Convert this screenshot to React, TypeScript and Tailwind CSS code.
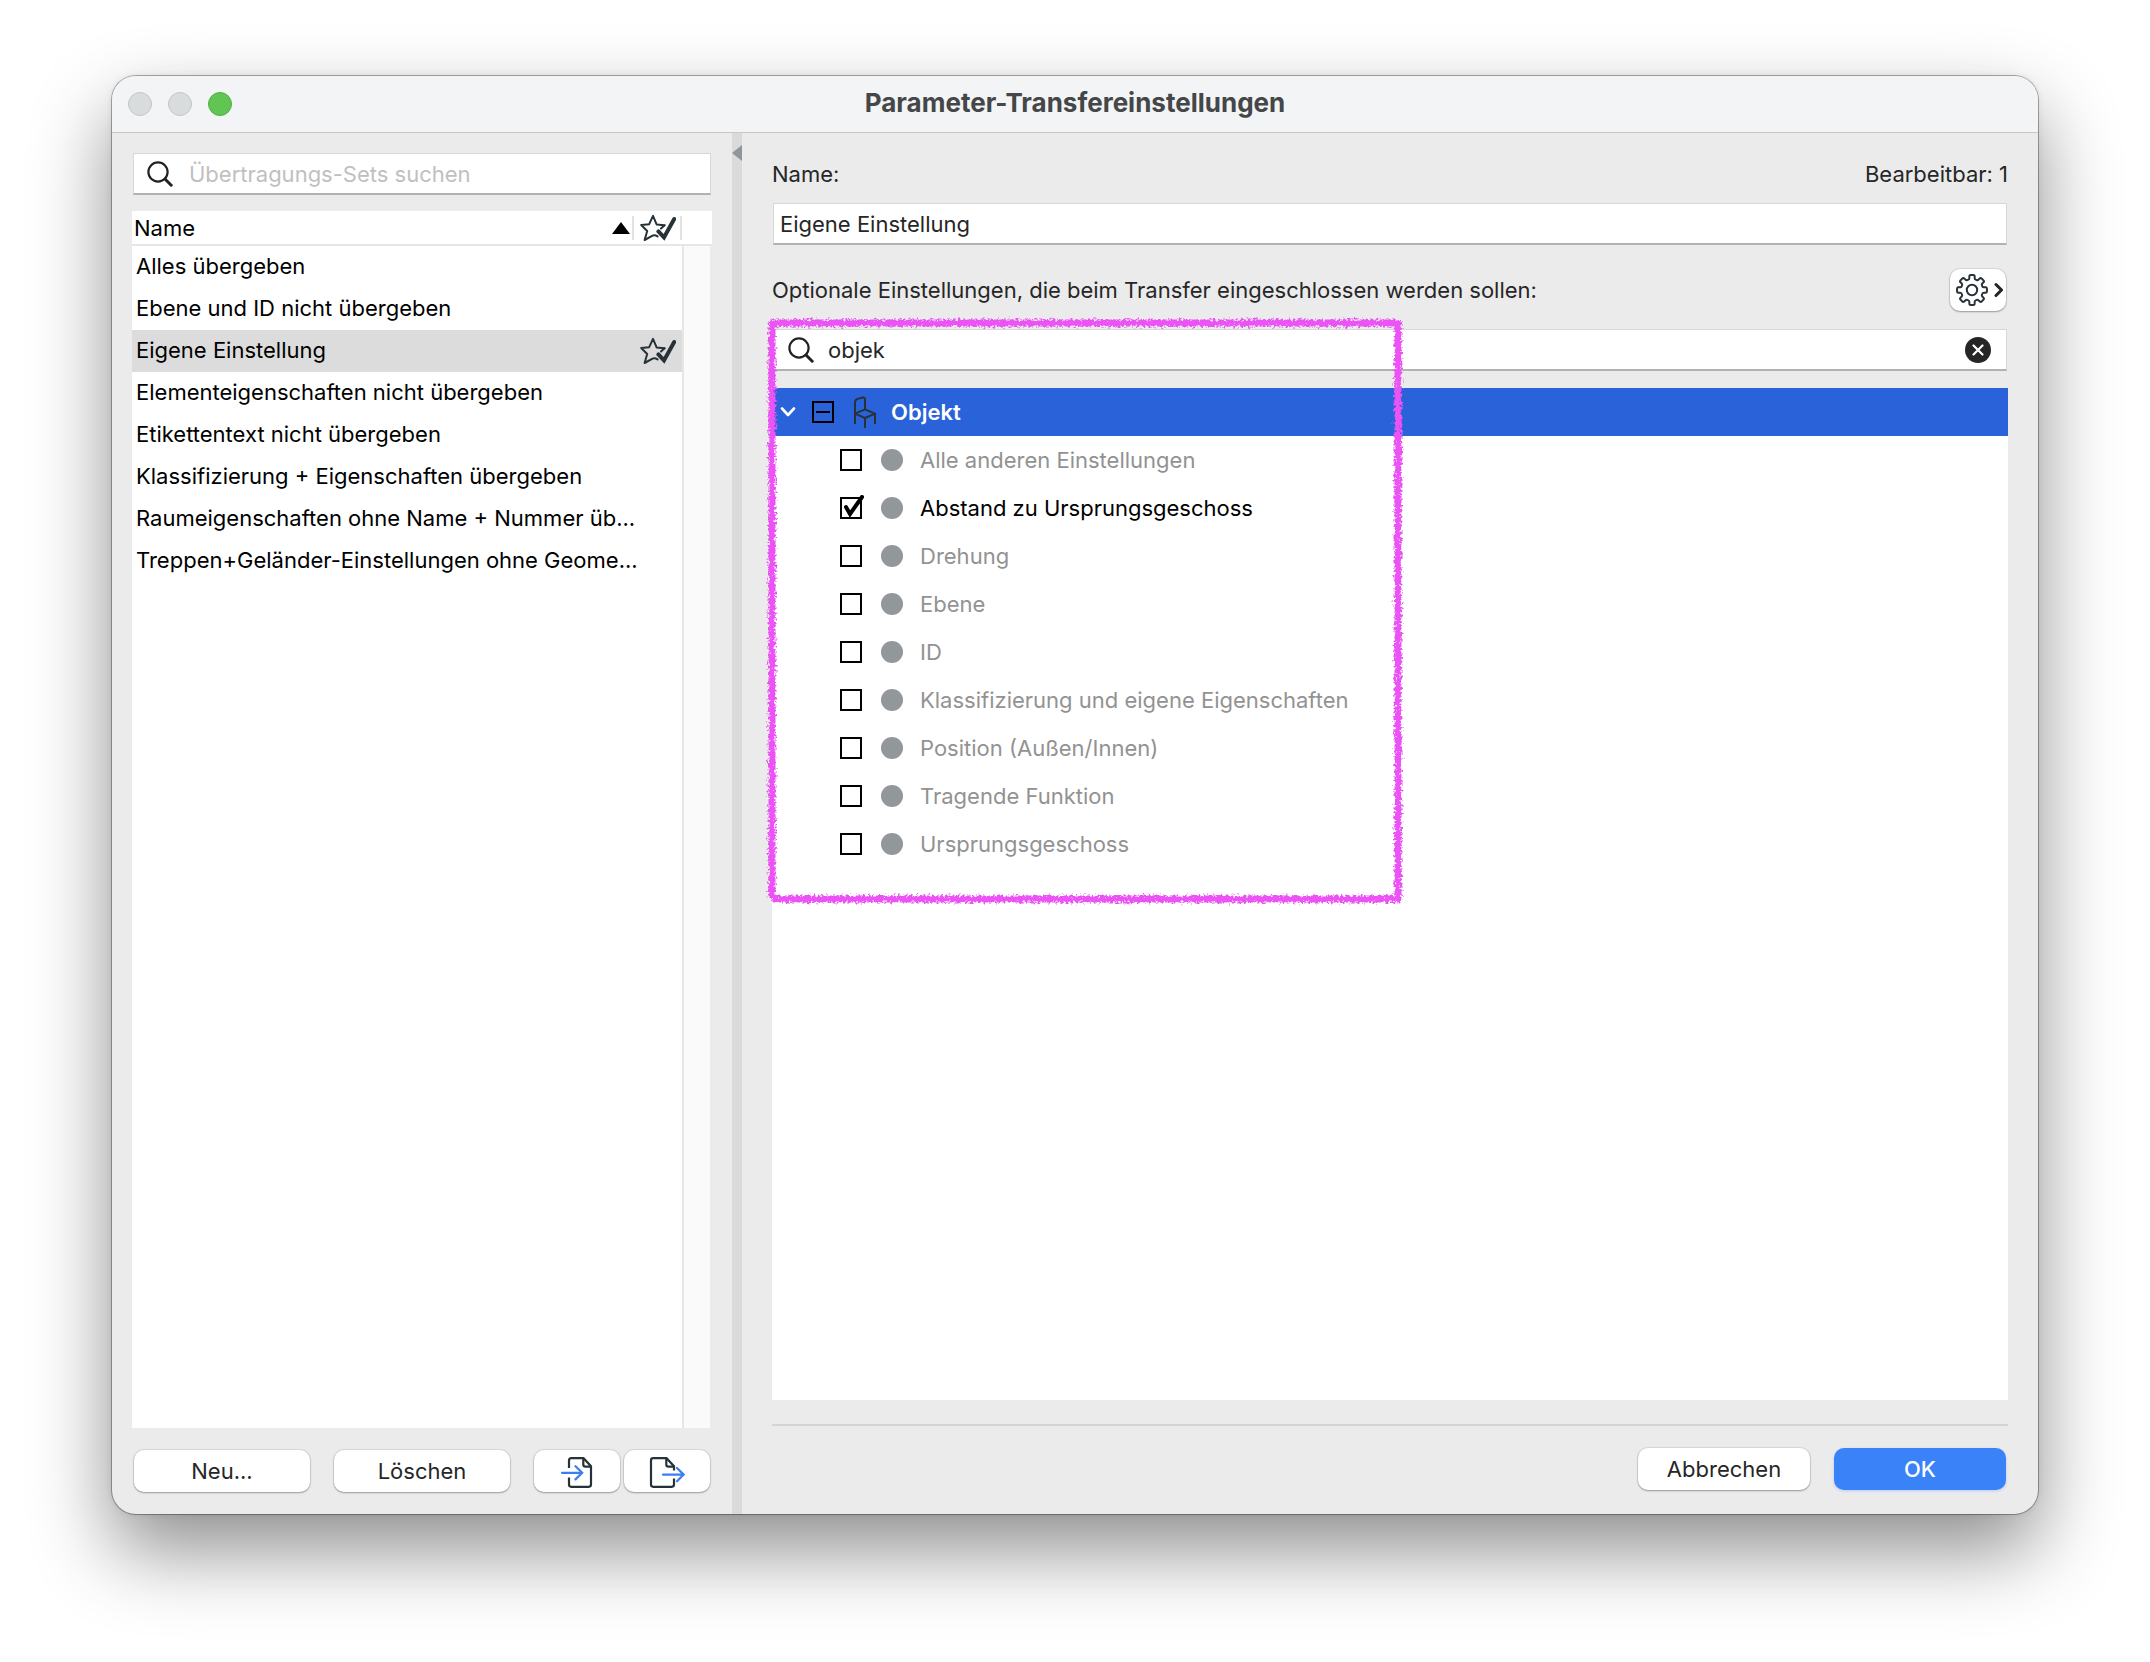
import { useState } from "react";

const sets = [
  "Alles übergeben",
  "Ebene und ID nicht übergeben",
  "Eigene Einstellung",
  "Elementeigenschaften nicht übergeben",
  "Etikettentext nicht übergeben",
  "Klassifizierung + Eigenschaften übergeben",
  "Raumeigenschaften ohne Name + Nummer üb...",
  "Treppen+Geländer-Einstellungen ohne Geome...",
];

const options = [
  "Alle anderen Einstellungen",
  "Abstand zu Ursprungsgeschoss",
  "Drehung",
  "Ebene",
  "ID",
  "Klassifizierung und eigene Eigenschaften",
  "Position (Außen/Innen)",
  "Tragende Funktion",
  "Ursprungsgeschoss",
];

const fieldClass =
  "flex h-[42px] items-center border border-b-2 border-[#d8d8d8] border-b-[#b2b2b2] bg-white";
const buttonClass =
  "flex h-[42px] items-center justify-center rounded-[10px] bg-white shadow-[0_0_0_1px_rgba(0,0,0,0.07),0_1px_2px_rgba(0,0,0,0.3)]";

function SearchIcon() {
  return (
    <svg className="h-[26px] w-[26px] shrink-0" viewBox="0 0 26 26" fill="none" stroke="#222" aria-hidden="true">
      <circle cx="11" cy="11" r="9.6" strokeWidth="2.2" />
      <path d="M18 18l6.2 6.2" strokeWidth="3" strokeLinecap="round" />
    </svg>
  );
}

function StarCheckIcon() {
  return (
    <svg className="h-7 w-9" viewBox="0 0 36 28" fill="none" stroke="#263238" aria-hidden="true">
      <path
        d="M24.5 11.3L16.6 10.4L13 1.8L9.2 10.2L1.2 11L7.2 17L4.6 26L12.6 21.6Q15 20.8 17.6 22.4"
        strokeWidth="2"
        strokeLinejoin="round"
        strokeLinecap="round"
      />
      <path d="M24.5 11.3L21 14.6" strokeWidth="2" strokeLinecap="round" />
      <path d="M18.4 17.4L24 23.4L34.2 5" strokeWidth="4" strokeLinecap="round" />
    </svg>
  );
}

function ImportIcon() {
  return (
    <svg className="h-8 w-8" viewBox="0 0 32 32" fill="none" strokeWidth="2.2" aria-hidden="true">
      <path d="M8 12V4.500Q8 2.200 10.200 2.200H22.500L30 10.200V28.600Q30 30.800 27.800 30.800H10.200Q8 30.800 8 28.600V21.500" stroke="#263238" />
      <path d="M22.300 2.500V8.500Q22.300 10.700 24.500 10.700H30" stroke="#263238" />
      <path d="M1 16.800H21M14.500 10.200L21.200 16.800L14.500 23.400" stroke="#3c7df6" strokeLinecap="round" />
    </svg>
  );
}

function ExportIcon() {
  return (
    <svg className="h-8 w-9" viewBox="0 0 36 32" fill="none" strokeWidth="2.2" aria-hidden="true">
      <path d="M25 14.500V10.200L17.500 2.200H4.200Q2 2.200 2 4.400V28.600Q2 30.800 4.200 30.800H22.800Q25 30.800 25 28.600V22.500" stroke="#263238" />
      <path d="M17.300 2.500V8.500Q17.300 10.700 19.500 10.700H25" stroke="#263238" />
      <path d="M14 18.600H34.500M28 12L34.700 18.600L28 25.200" stroke="#3c7df6" strokeLinecap="round" />
    </svg>
  );
}

function GearIcon() {
  const points: string[] = [];
  for (let i = 0; i < 8; i++) {
    const at = (deg: number, r: number) => {
      const a = ((i * 45 + deg - 90) * Math.PI) / 180;
      return `${(16 + r * Math.cos(a)).toFixed(2)} ${(16 + r * Math.sin(a)).toFixed(2)}`;
    };
    points.push(
      `${i === 0 ? "M" : "L"}${at(-12.5, 12.4)}L${at(-11, 13.8)}Q${at(-10.5, 15.2)} ${at(-5, 15)}L${at(5, 15)}Q${at(10.5, 15.2)} ${at(11, 13.8)}L${at(12.5, 12.4)}Q${at(14, 11)} ${at(19, 11)}L${at(26, 11)}Q${at(31, 11)} ${at(32.5, 12.4)}`,
    );
  }
  return (
    <svg className="h-8 w-8" viewBox="0 0 32 32" fill="none" stroke="#263238" strokeWidth="2" strokeLinejoin="round" aria-hidden="true">
      <path d={points.join("") + "Z"} />
      <circle cx="16" cy="16" r="5.2" />
    </svg>
  );
}

function ChairIcon() {
  return (
    <svg className="h-8 w-6" viewBox="0 0 24 32" fill="none" stroke="#263238" strokeWidth="2" aria-hidden="true">
      <path d="M2 28V6.500Q2 3.600 4.800 2.900L9.600 1.600Q12 1.200 12 3.400V13.500" />
      <path d="M2 17.600L12 13.400L22 17.600L12 22Z" strokeLinejoin="round" />
      <path d="M22 17V28M12 22V32" />
    </svg>
  );
}

function MarkerFrame() {
  return (
    <svg
      className="pointer-events-none absolute -left-1.5 -top-[14px] h-[592px] w-[640px]"
      viewBox="0 0 640 592"
      fill="none"
      aria-hidden="true"
    >
      <filter id="crayon" x="0" y="0" width="640" height="592" filterUnits="userSpaceOnUse">
        <feTurbulence type="fractalNoise" baseFrequency="0.4" numOctaves="2" seed="4" result="noise" />
        <feDisplacementMap in="SourceGraphic" in2="noise" scale="8" xChannelSelector="R" yChannelSelector="G" />
      </filter>
      <g filter="url(#crayon)" stroke="#ec52f5" strokeWidth="7">
        <path d="M3 8H633" />
        <path d="M6 5V583" />
        <path d="M632 6V585" />
        <path d="M6 584H635" />
      </g>
    </svg>
  );
}

export default function App() {
  const [selected, setSelected] = useState(2);
  const [checked, setChecked] = useState<number[]>([1]);
  const [name, setName] = useState("Eigene Einstellung");
  const [filter, setFilter] = useState("objek");
  const toggle = (i: number) =>
    setChecked((c) => (c.includes(i) ? c.filter((x) => x !== i) : [...c, i]));

  return (
    <div className="flex min-h-screen flex-col bg-white px-28 pt-[76px] pb-[148px] font-['Inter',sans-serif] text-[22px] leading-7 text-[#262626]">
      <main className="flex flex-1 flex-col overflow-hidden rounded-[24px] bg-[#ebebeb] shadow-[0_0_0_1px_rgba(0,0,0,0.3),0_0_6px_rgba(0,0,0,0.1),0_36px_80px_rgba(0,0,0,0.45)]">
        <header className="grid h-[57px] shrink-0 grid-cols-[1fr_auto_1fr] items-center border-b border-[#c6c8c9] bg-[#f2f4f6] px-4">
          <div className="flex gap-4">
            <button aria-label="Schließen" className="h-6 w-6 rounded-full border border-[#c3c5c6] bg-[#d9dcdd]" />
            <button aria-label="Minimieren" className="h-6 w-6 rounded-full border border-[#c3c5c6] bg-[#d9dcdd]" />
            <button aria-label="Maximieren" className="h-6 w-6 rounded-full border border-[#54ad46] bg-[#61c554]" />
          </div>
          <h1 className="pb-0.5 text-[26px] font-bold text-[#454647]">Parameter-Transfereinstellungen</h1>
        </header>

        <div className="flex flex-1">
          <section className="flex w-[620px] shrink-0 flex-col px-5 pt-5 pb-[22px]">
            <label className={`${fieldClass} mx-px gap-4 pl-[13px]`}>
              <SearchIcon />
              <input
                aria-label="Übertragungs-Sets suchen"
                placeholder="Übertragungs-Sets suchen"
                className="min-w-0 flex-1 outline-none placeholder:text-[#c0c0c0]"
              />
            </label>

            <div className="mt-4 flex flex-1 flex-col">
              <table className="w-full table-fixed border-collapse text-black">
                <colgroup>
                  <col />
                  <col className="w-12" />
                  <col className="w-[30px]" />
                </colgroup>
                <thead>
                  <tr className="h-[34px] border-b-2 border-[#e6e6e6] bg-white">
                    <th className="p-0 text-left font-normal">
                      <button className="flex w-full items-center justify-between border-r-2 border-[#e2e2e2] px-0.5 leading-6">
                        Name
                        <svg className="h-3 w-[18px]" viewBox="0 0 18 12" aria-hidden="true">
                          <path d="M9 0L18 12H0Z" fill="#000" />
                        </svg>
                      </button>
                    </th>
                    <th className="p-0" aria-label="Favorit">
                      <span className="flex h-6 items-center border-r-2 border-[#e2e2e2] pl-1.5">
                        <StarCheckIcon />
                      </span>
                    </th>
                    <td />
                  </tr>
                </thead>
                <tbody>
                  {sets.map((s, i) => (
                    <tr
                      key={s}
                      onClick={() => setSelected(i)}
                      className={`h-[42px] ${i === selected ? "bg-[#dcdcdc]" : "bg-white"}`}
                    >
                      <td className="pt-0 pr-0 pb-0.5 pl-1 whitespace-nowrap">{s}</td>
                      <td className="py-0 pr-0 pl-1.5">{i === selected && <StarCheckIcon />}</td>
                      <td className="bg-[#ebebeb] p-0">
                        <div className="mr-0.5 h-[42px] border-l-2 border-[#e6e6e6] bg-[#fafafa]" />
                      </td>
                    </tr>
                  ))}
                </tbody>
              </table>
              <div className="flex flex-1 pr-0.5">
                <div className="flex-1 bg-white" />
                <div className="w-7 border-l-2 border-[#e6e6e6] bg-[#fafafa]" />
              </div>
            </div>

            <div className="mx-0.5 mt-[22px] flex gap-6">
              <button className={`${buttonClass} flex-1`}>Neu...</button>
              <button className={`${buttonClass} flex-1`}>Löschen</button>
              <div className="flex gap-1">
                <button aria-label="Importieren" className={`${buttonClass} w-[86px] pt-0.5`}>
                  <ImportIcon />
                </button>
                <button aria-label="Exportieren" className={`${buttonClass} w-[86px] pt-0.5`}>
                  <ExportIcon />
                </button>
              </div>
            </div>
          </section>

          <div className="w-2.5 shrink-0 bg-[#dadada] pt-3">
            <svg className="h-4 w-2.5" viewBox="0 0 10 16" aria-hidden="true">
              <path d="M0 8L10 0V16Z" fill="#8f9599" />
            </svg>
          </div>

          <section className="flex min-w-0 flex-1 flex-col px-[30px] pt-[27px] pb-6">
            <div className="flex justify-between">
              <label htmlFor="set-name">Name:</label>
              <span>Bearbeitbar: 1</span>
            </div>
            <input
              id="set-name"
              value={name}
              onChange={(e) => setName(e.target.value)}
              className={`${fieldClass} mx-px mt-[15px] px-1.5 outline-none`}
            />
            <div className="mt-6 mr-0.5 flex items-center justify-between">
              <span>Optionale Einstellungen, die beim Transfer eingeschlossen werden sollen:</span>
              <button aria-label="Einstellungen" className={`${buttonClass} w-14 gap-1.5 pl-1`}>
                <GearIcon />
                <svg className="h-4 w-2.5" viewBox="0 0 10 16" fill="none" stroke="#222" strokeWidth="3" strokeLinecap="round" strokeLinejoin="round" aria-hidden="true">
                  <path d="M2 2.500L7.500 8L2 13.500" />
                </svg>
              </button>
            </div>

            <div className="relative mt-[18px] flex flex-1 flex-col">
              <div className={`${fieldClass} mx-px gap-3.5 pr-[15px] pl-3.5`}>
                <SearchIcon />
                <input
                  aria-label="Einstellungen suchen"
                  value={filter}
                  onChange={(e) => setFilter(e.target.value)}
                  className="min-w-0 flex-1 outline-none"
                />
                <button aria-label="Suche löschen" onClick={() => setFilter("")}>
                  <svg className="h-[26px] w-[26px]" viewBox="0 0 26 26" aria-hidden="true">
                    <circle cx="13" cy="13" r="13" fill="#262626" />
                    <path d="M8.500 8.500L17.500 17.500M17.500 8.500L8.500 17.500" stroke="#fff" strokeWidth="2.200" strokeLinecap="round" />
                  </svg>
                </button>
              </div>

              <div className="mt-[17px] flex-1 bg-white">
                <div className="flex h-12 items-center bg-[#2962d9] pl-2 font-semibold text-white">
                  <button aria-label="Objekt zuklappen">
                    <svg className="h-3 w-4" viewBox="0 0 16 12" fill="none" stroke="#fff" strokeWidth="2.600" strokeLinecap="round" strokeLinejoin="round" aria-hidden="true">
                      <path d="M2 2.500L8 9L14 2.500" />
                    </svg>
                  </button>
                  <label className="ml-4 flex items-center">
                    <span className="relative flex">
                      <input
                        type="checkbox"
                        aria-checked="mixed"
                        className="h-[22px] w-[22px] appearance-none border-2 border-black"
                      />
                      <span className="absolute top-2.5 left-1 h-0.5 w-3.5 bg-black" />
                    </span>
                    <span className="mr-3.5 ml-[19px]">
                      <ChairIcon />
                    </span>
                    Objekt
                  </label>
                </div>
                <ul>
                  {options.map((o, i) => {
                    const on = checked.includes(i);
                    return (
                      <li key={o}>
                        <label className={`flex h-12 items-center pl-[68px] ${on ? "text-black" : "text-[#929292]"}`}>
                          <span className="relative flex">
                            <input
                              type="checkbox"
                              checked={on}
                              onChange={() => toggle(i)}
                              className="h-[22px] w-[22px] appearance-none border-2 border-black"
                            />
                            {on && (
                              <svg className="pointer-events-none absolute -top-0.5 left-0 h-6 w-6" viewBox="0 0 24 24" fill="none" stroke="#000" strokeWidth="4" strokeLinecap="round" aria-hidden="true">
                                <path d="M6 12L10 19L22 2" />
                              </svg>
                            )}
                          </span>
                          <span className="mr-[17px] ml-[19px] h-[22px] w-[22px] rounded-full bg-[#92979a]" />
                          {o}
                        </label>
                      </li>
                    );
                  })}
                </ul>
              </div>
              <MarkerFrame />
            </div>

            <hr className="mt-6 border-t-2 border-[#d4d4d4]" />
            <div className="mt-[22px] mr-0.5 flex justify-end gap-6">
              <button className={`${buttonClass} w-[172px]`}>Abbrechen</button>
              <button className="h-[42px] w-[172px] rounded-[10px] bg-[#3a82f7] font-medium text-white shadow-[0_1px_3px_rgba(58,130,247,0.3)]">
                OK
              </button>
            </div>
          </section>
        </div>
      </main>
    </div>
  );
}
